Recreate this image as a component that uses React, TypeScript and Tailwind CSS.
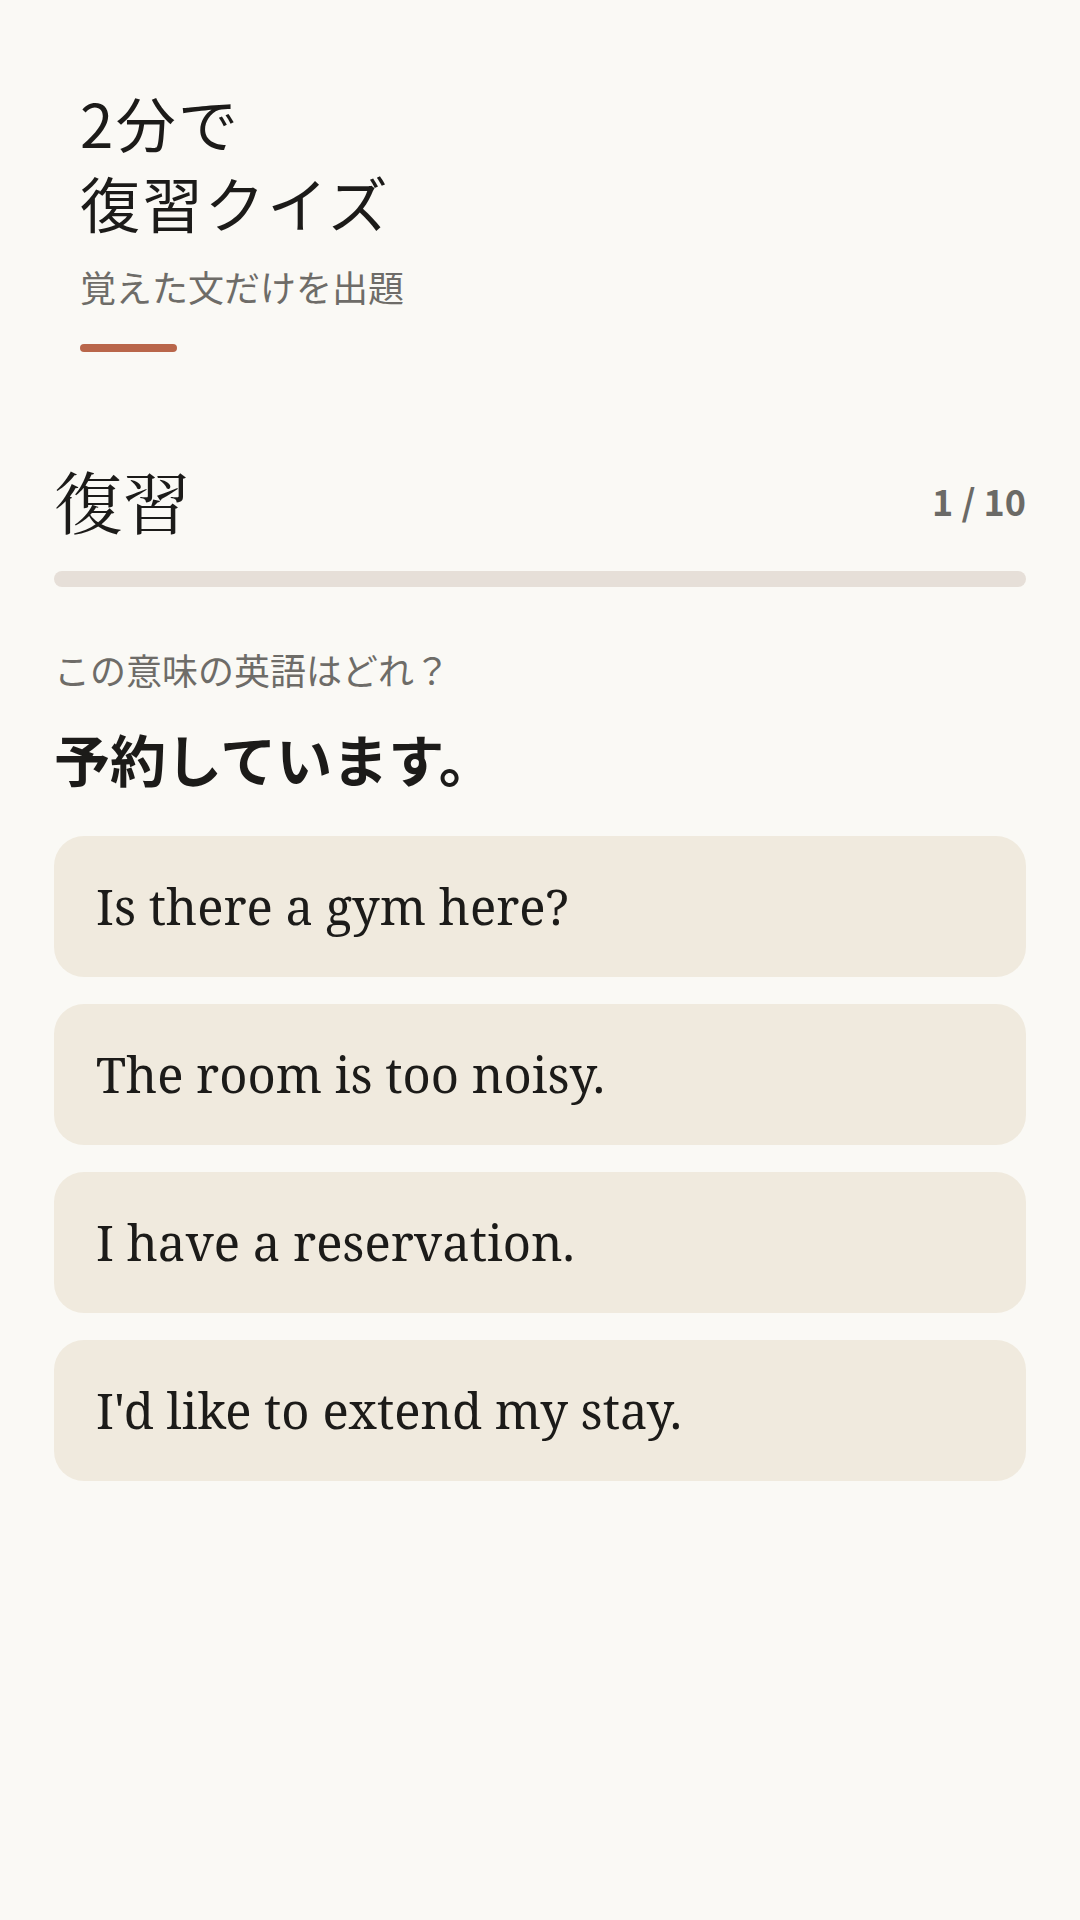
const options = [
  "Is there a gym here?",
  "The room is too noisy.",
  "I have a reservation.",
  "I'd like to extend my stay.",
];

const sans = "font-['Noto_Sans_CJK_JP','Noto_Sans',sans-serif]";

export default function App() {
  return (
    <div className={`min-h-screen bg-[#faf9f5] text-[#1c1b19] ${sans}`}>
      <header className="px-[80px] pt-[82px]">
        <h1 className="text-[60px] leading-[80px] font-normal tracking-[0.04em]">
          2分で
          <br />
          復習クイズ
        </h1>
        <p className="mt-[19px] text-[36px] leading-[50px] text-[#6e6c68]">覚えた文だけを出題</p>
        <div className="mt-[33px] h-2 w-[97px] rounded-full bg-[#b9664a]" />
      </header>

      <main className="px-[54px] pt-[104px]">
        <div className="flex items-center justify-between">
          <h2 className="font-['Noto_Serif_CJK_JP','Noto_Serif',serif] text-[68px] leading-[88px] font-normal">
            復習
          </h2>
          <span className="text-[36px] font-semibold text-[#6b6a66]">1 / 10</span>
        </div>
        <div className="mt-[27px] h-4 w-full rounded-full bg-[#e6dfd8]" />

        <p className="mt-[57px] text-[36px] leading-[50px] text-[#6e6c68]">この意味の英語はどれ？</p>
        <p className="mt-[28px] text-[56px] leading-[72px] font-bold">予約しています。</p>

        <div className="mt-[42px] flex flex-col gap-[27px]">
          {options.map((o) => (
            <button
              key={o}
              className="flex h-[141px] items-center rounded-[30px] bg-[#f0eade] px-[42px] text-left font-['Noto_Serif','DejaVu_Serif',serif] text-[49px] text-[#1c1b19]"
            >
              {o}
            </button>
          ))}
        </div>
      </main>
    </div>
  );
}
